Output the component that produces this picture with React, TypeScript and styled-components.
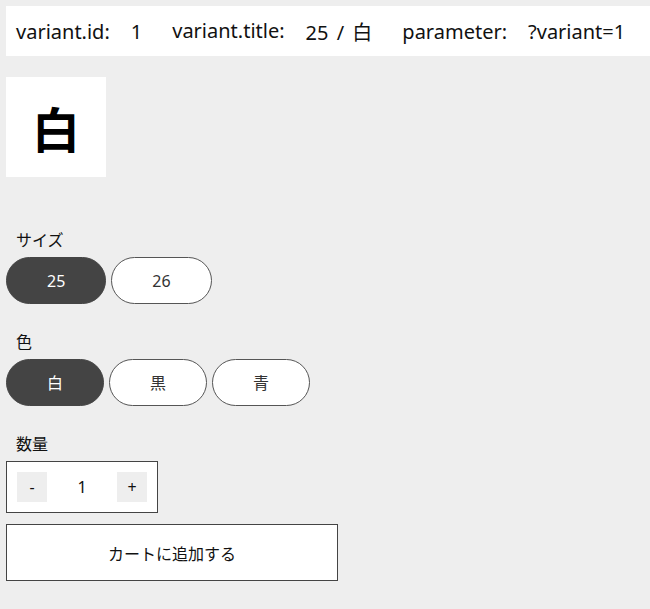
import styled, { createGlobalStyle } from "styled-components";

const GlobalStyle = createGlobalStyle`
  html, body {
    margin: 0;
    padding: 0;
    background: #eeeeee;
  }
  body {
    padding: 6px 0 0 6px;
    font-family: "Noto Sans", "Noto Sans CJK JP", sans-serif;
    color: #111;
    overflow: hidden;
  }
`;

const InfoBar = styled.div`
  display: flex;
  align-items: center;
  height: 50px;
  padding: 0 10px;
  background: #fff;
  font-size: 20px;
  white-space: nowrap;
  gap: 30px;
`;

const InfoItem = styled.div`
  display: flex;
  gap: 21px;
`;

const InfoValue = styled.span`
  word-spacing: 3px;
`;

const Thumb = styled.div`
  display: flex;
  align-items: center;
  justify-content: center;
  width: 100px;
  height: 100px;
  margin-top: 21px;
  background: #fff;
  font-size: 48px;
  font-weight: 700;
  color: #000;
`;

const Group = styled.section<{ $top: number }>`
  margin-top: ${(p) => p.$top}px;
`;

const Label = styled.div`
  padding-left: 10px;
  font-size: 16px;
  line-height: 24px;
  margin-bottom: 5px;
`;

const Options = styled.div`
  display: flex;
  gap: 5px;
`;

const Option = styled.button<{ $active?: boolean }>`
  height: 47px;
  padding: 0 40px;
  border-radius: 24px;
  border: 1px solid ${(p) => (p.$active ? "#444" : "#555")};
  background: ${(p) => (p.$active ? "#444" : "#fff")};
  color: ${(p) => (p.$active ? "#fff" : "#333")};
  font-family: inherit;
  font-size: 16px;
  line-height: 24px;
  cursor: pointer;
`;

const Quantity = styled.div`
  display: flex;
  align-items: center;
  box-sizing: border-box;
  width: 152px;
  height: 52px;
  padding: 0 10px;
  border: 1px solid #444;
  background: #fff;
`;

const StepButton = styled.button`
  width: 30px;
  height: 30px;
  padding: 0;
  border: none;
  background: #eee;
  color: #111;
  font-family: inherit;
  font-size: 16px;
  cursor: pointer;
`;

const Count = styled.span`
  flex: 1;
  text-align: center;
  font-size: 16px;
`;

const CartButton = styled.button`
  display: block;
  box-sizing: border-box;
  width: 332px;
  height: 57px;
  margin-top: 11px;
  border: 1px solid #444;
  background: #fff;
  color: #111;
  font-family: inherit;
  font-size: 16px;
  cursor: pointer;
`;

export default function App() {
  return (
    <>
      <GlobalStyle />
      <InfoBar>
        <InfoItem>
          <span>variant.id:</span>
          <InfoValue>1</InfoValue>
        </InfoItem>
        <InfoItem>
          <span>variant.title:</span>
          <InfoValue>25 / 白</InfoValue>
        </InfoItem>
        <InfoItem>
          <span>parameter:</span>
          <InfoValue>?variant=1</InfoValue>
        </InfoItem>
      </InfoBar>
      <Thumb>白</Thumb>
      <Group $top={51}>
        <Label>サイズ</Label>
        <Options>
          <Option $active>25</Option>
          <Option>26</Option>
        </Options>
      </Group>
      <Group $top={26}>
        <Label>色</Label>
        <Options>
          <Option $active>白</Option>
          <Option>黒</Option>
          <Option>青</Option>
        </Options>
      </Group>
      <Group $top={26}>
        <Label>数量</Label>
        <Quantity>
          <StepButton>-</StepButton>
          <Count>1</Count>
          <StepButton>+</StepButton>
        </Quantity>
      </Group>
      <CartButton>カートに追加する</CartButton>
    </>
  );
}
